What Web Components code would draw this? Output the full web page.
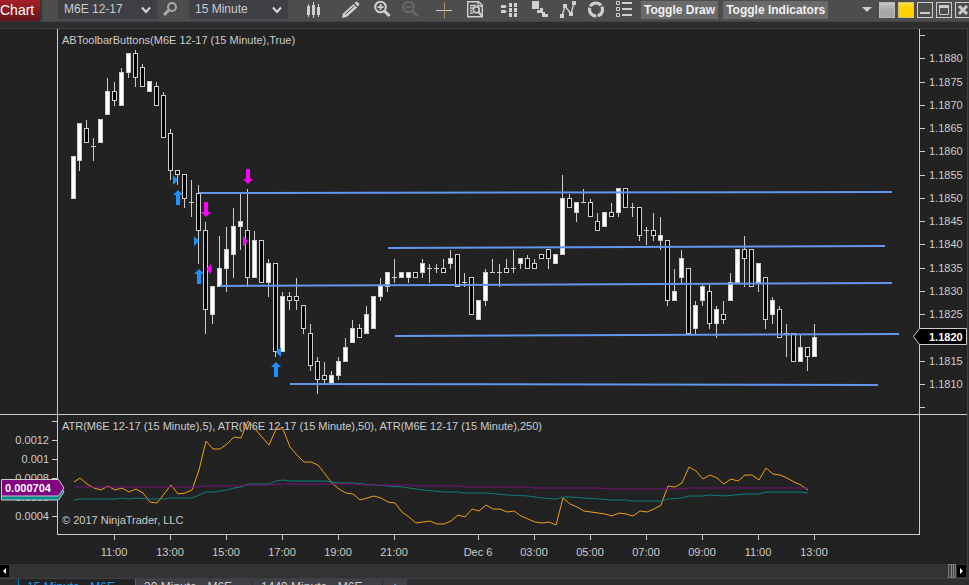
<!DOCTYPE html>
<html lang="en">
<head>
<meta charset="utf-8">
<title>Chart</title>
<style>
  html, body { margin: 0; height: 100%; }
  body {
    --line: #cccccc;
    --chrome: #2d2d30;
    --edge: #3f3f46;
    --canvas: #222222;
    background: var(--chrome);
    color: #cccccc;
    font: 11px/13px "Liberation Sans", Arial, sans-serif;
    overflow: hidden;
  }
</style>
</head>
<body>
<chart-window></chart-window>

<script>
// each candle: x, high, body top, body bottom, low, kind (u = up, d = down, n = unchanged)
const CANDLES = `
73 156 156 199 199 u|79 123 123 161 171 u|86 120 128 143 143 d|93 138 146 147 161 n|100 119 119 143 143 u
107 78 91 115 115 u|114 82 91 101 106 d|121 68 72 106 106 u|128 53 53 73 78 u|135 50 53 78 87 d
142 64 67 87 87 d|149 81 81 92 92 u|156 82 86 106 106 d|163 92 95 138 138 d|170 129 133 171 180 d
177 170 170 175 185 d|184 174 174 199 208 d|191 180 202 203 217 n|198 185 193 231 264 d|205 222 230 310 334 d
212 286 286 315 324 u|219 236 268 287 287 u|226 227 249 269 292 u|233 208 226 255 278 u|240 194 221 227 250 u
247 189 230 278 287 d|254 231 240 278 278 u|261 240 240 283 283 d|268 259 263 283 297 u|275 263 263 352 357 d
282 292 296 352 352 u|289 292 296 301 310 d|296 278 296 301 310 d|303 305 305 329 334 d|310 324 333 366 371 d
317 357 361 380 394 d|324 362 375 380 383 d|331 371 375 384 384 u|338 357 361 376 380 u|345 338 347 362 362 u
352 320 328 343 343 u|359 324 328 338 338 d|366 306 314 334 334 u|373 296 296 329 329 u|380 278 285 297 301 u
387 272 272 287 292 u|394 259 277 278 283 n|401 272 272 278 278 u|408 272 272 278 283 u|415 272 272 278 278 d
422 259 263 273 278 u|429 264 268 269 283 n|436 264 268 269 273 n|443 259 268 273 273 d|450 250 258 264 269 u
457 254 254 287 287 d|464 273 282 283 287 n|471 277 277 315 315 d|478 300 300 320 320 u|485 269 272 301 306 u
492 259 272 273 273 n|499 264 272 273 287 n|506 259 268 273 273 d|513 250 268 269 273 n|520 258 258 264 269 u
527 255 258 269 269 d|534 259 263 269 269 d|541 254 254 259 259 d|548 249 249 259 269 d|555 254 254 264 264 u
562 175 198 255 255 u|569 194 198 208 208 d|576 202 202 213 222 u|583 189 202 203 203 n|590 199 202 217 217 d
597 213 221 231 231 d|604 212 212 227 227 u|611 203 212 217 217 d|618 188 188 213 217 u|625 188 188 208 208 d
632 203 207 208 217 n|639 207 207 236 241 d|646 227 230 231 245 n|653 213 230 236 241 d|660 217 235 241 250 u
667 240 240 301 306 d|674 269 291 301 301 u|681 250 258 278 283 u|688 268 268 334 334 d|695 301 305 329 334 u
702 284 286 301 306 u|709 284 291 324 329 d|716 306 309 324 338 u|723 301 314 320 324 d|730 273 282 301 301 u
737 249 249 283 283 u|744 236 249 259 287 d|751 249 249 287 287 d|758 263 263 283 292 u|765 277 277 320 329 d
772 297 300 315 324 u|779 306 309 338 338 d|786 324 333 334 357 n|793 333 333 362 362 d|800 335 347 362 362 u
807 347 347 357 371 d|814 324 337 357 357 u`.trim().split(/[|\n]/).map(row => row.split(' '));

// ATR(5) has one value per bar, bars are 7 units apart
const ATR_FAST = [478,484,488,490,486,490,488,492,489,493,502,503,494,485,494,493,490,470,441,449,449,444,437,438,
  421,429,437,445,429,429,447,455,462,462,465,474,483,489,493,494,500,498,496,498,502,503,512,517,523,522,521,524,
  524,521,515,517,509,511,505,509,509,512,511,516,519,522,523,522,525,498,504,507,511,512,513,514,516,513,514,516,
  511,512,509,505,486,487,483,467,471,479,475,478,484,479,481,475,475,480,468,474,475,478,482,485,490];

const ATR_MID = '74,500 80,499 115,499 122,498 129,499 136,498 150,499 165,499 171,498 192,498 199,495 206,492 213,492 227,490 234,488 241,487 248,484 269,484 276,481 283,480 290,481 325,481 339,483 353,483 374,485 402,487 423,490 444,492 458,492 465,493 486,493 507,495 528,496 542,498 556,499 563,497 570,497 584,498 600,499 612,500 626,500 633,501 661,501 668,499 682,498 689,496 703,496 710,495 724,496 745,494 759,494 766,492 801,492 808,493';
const ATR_SLOW = '74,487 199,487 206,486 234,486 248,485 269,485 283,484 353,484 367,485 409,485 416,486 458,486 465,487 528,487 535,488 598,488 612,489 682,489 689,488 808,488';

const ICONS = {
  bars: `<path d="M6 4h1v13h-1zM11 2h1v16h-1zM16 4h1v13h-1zM5 6h3v9h-3zM10 5h3v10h-3zM15 7h3v8h-3z"/>`,
  pencil: `<path d="M3 18l1-4.600L14.500 3.900l3.700 3.600L7.600 17z"/><path d="M15.500 3l1.200-1.100q.9-.6 1.700 0l1.500 1.500q.9.900.1 1.800L18.900 6.500z"/><path d="M6 14.500L15.500 6" stroke="#4d4d4d" fill="none"/>`,
  zoomIn: `<circle cx="10.500" cy="7" r="5.300" fill="none" stroke="currentColor" stroke-width="2"/><path d="M7.500 6.200h2.200V4h1.700v2.200h2.200v1.700h-2.200v2.200H9.700V7.900H7.500z"/><path d="M14.500 11l5 5" stroke="currentColor" stroke-width="3"/>`,
  zoomOut: `<circle cx="10.500" cy="7" r="5.300" fill="none" stroke="currentColor" stroke-width="2"/><path d="M7.500 6.200h6v1.700h-6z"/><path d="M14.500 11l5 5" stroke="currentColor" stroke-width="3"/>`,
  cross: `<path d="M4 10h16v1H4z"/><path d="M12 2h1v16h-1z" fill="#b09468"/>`,
  data: `<path d="M4.700 1.700h11l3.600 3.600v11.400H4.700z" fill="none" stroke="currentColor" stroke-width="1.400"/><path d="M15 1v5h5M7 5.500h6M7 8h3M7 10.500h2M7 13h3" fill="none" stroke="currentColor" stroke-width="1.300"/><circle cx="13.300" cy="9.800" r="3" fill="none" stroke="currentColor" stroke-width="1.600"/><path d="M15.300 12l4 4.300" stroke="currentColor" stroke-width="2"/>`,
  align: `<path d="M4 5h4l2 1.500L8 8H4zM4 10h4l2 1.500L8 13H4zM12 3h3v4h-3zM12 8h3v4h-3zM12 13h3v4h-3zM17 3h3v4h-3zM17 8h3v4h-3zM17 13h3v4h-3z"/>`,
  steps: `<path d="M4 1h7v8H4zM9 10h3V8h3v4h2v2h3v3h-6v-4h-5z"/>`,
  zigzag: `<path d="M6 16L9 6l6 8 3-11" fill="none" stroke="currentColor" stroke-width="1.400"/><path d="M4 14h4v4H4zM7 4h4v4H7zM13 12h4v4h-4zM16 1h4v4h-4z"/>`,
  ring: `<circle cx="12" cy="9.500" r="6.500" fill="none" stroke="currentColor" stroke-width="3.200" stroke-dasharray="12.200 1.400" stroke-dashoffset="4"/>`,
  list: `<path d="M4.500 1.500h3v3h-3zM4.500 7.500h3v3h-3zM4.500 13.500h3v3h-3z" fill="none" stroke="currentColor"/><path d="M10 2h10v2H10zM10 8h10v2H10zM10 14h10v2H10z"/>`
};

class ToolIcon extends HTMLElement {
  constructor() {
    super();
    this.attachShadow({ mode: 'open' });
    this.shadowRoot.innerHTML = `
      <style>
        :host { display: block; width: 24px; height: 20px; }
        button {
          display: block;
          padding: 0;
          border: 0;
          background: none;
          color: #d0d0d0;
        }
        button:disabled { color: #686868; }
        svg { display: block; fill: currentColor; }
      </style>
      <button type="button"><svg width="24" height="20" viewBox="0 0 24 20"></svg></button>`;
  }

  connectedCallback() {
    const button = this.shadowRoot.querySelector('button');
    button.setAttribute('aria-label', this.getAttribute('label'));
    button.disabled = this.hasAttribute('disabled');
    button.firstElementChild.innerHTML = ICONS[this.getAttribute('name')];
  }
}

class ToolSelect extends HTMLElement {
  constructor() {
    super();
    this.attachShadow({ mode: 'open' });
    this.shadowRoot.innerHTML = `
      <style>
        :host { display: grid; width: 99px; height: 19px; }
        select {
          grid-area: 1 / 1;
          appearance: none;
          box-sizing: border-box;
          width: 100%;
          height: 100%;
          margin: 0;
          padding: 0 20px 0 6px;
          border: 0;
          border-radius: 0;
          background: var(--edge);
          color: #cccccc;
          font: 12px/19px "Liberation Sans", Arial, sans-serif;
        }
        svg {
          grid-area: 1 / 1;
          place-self: center end;
          margin-right: 6px;
          pointer-events: none;
        }
      </style>
      <select></select>
      <svg width="10" height="8" viewBox="0 0 10 8"><path d="M1 1.500l4 4.500 4-4.500" fill="none" stroke="#d8d8d8" stroke-width="2"/></svg>`;
  }

  connectedCallback() {
    const select = this.shadowRoot.querySelector('select');
    select.setAttribute('aria-label', this.getAttribute('label'));
    select.add(new Option(this.getAttribute('value')));
  }
}

class ChartToolbar extends HTMLElement {
  constructor() {
    super();
    this.attachShadow({ mode: 'open' });
    this.shadowRoot.innerHTML = `
      <style>
        :host {
          display: flex;
          height: 21px;
          background: #4d4d4d;
          border-bottom: 1px solid #444446;
        }
        .title {
          width: 40px;
          margin-right: 18px;
          background: linear-gradient(#a32126, #66141a);
          color: #ffffff;
          font-size: 14px;
          line-height: 20px;
          box-shadow: 1px 0 3px #222222;
        }
        .search {
          width: 32px;
          height: 20px;
          padding: 0;
          border: 0;
          background: none;
        }
        .search svg { display: block; }
        .tools {
          display: grid;
          grid-template-columns: 37px 31px 28px 34px 31px 34px 31px 28px 28px 28px 24px;
          margin: 0 5px 0 14px;
        }
        .toggle {
          height: 18px;
          margin: 1px 5px 0 0;
          padding: 0 3px;
          border: 0;
          background: #6a6a6a;
          color: #f0f0f0;
          font: bold 12px/18px "Liberation Sans", Arial, sans-serif;
          white-space: nowrap;
        }
        .caption {
          display: flex;
          gap: 3px;
          margin: 0 -2px 0 auto;
          padding-top: 2px;
        }
        .caption button {
          box-sizing: border-box;
          width: 16px;
          height: 16px;
          padding: 0;
          border: 1px solid #cccccc;
          background: none;
        }
        .caption svg { display: block; }
        .caption .drop { border: 0; width: 12px; margin-right: 3px; }
        .caption .grey { background: linear-gradient(#c9c6c6, #a9a6a6 50%); border-color: #b9b6b6; }
        .caption .gold { background: linear-gradient(#ffdf40, #ffd200 40%); border-color: #d6c070; }
      </style>
      <div class="title">Chart</div>
      <tool-select label="Instrument" value="M6E 12-17"></tool-select>
      <button class="search" type="button" aria-label="Find instrument">
        <svg width="32" height="20" viewBox="0 0 32 20" fill="none" stroke="#a8a8a8"><circle cx="15" cy="7" r="4" stroke-width="2"/><path d="M12 10l-5 5" stroke-width="3"/></svg>
      </button>
      <tool-select label="Interval" value="15 Minute"></tool-select>
      <div class="tools">
        <tool-icon name="bars" label="Chart style"></tool-icon>
        <tool-icon name="pencil" label="Drawing tools"></tool-icon>
        <tool-icon name="zoomIn" label="Zoom in"></tool-icon>
        <tool-icon name="zoomOut" label="Zoom out" disabled></tool-icon>
        <tool-icon name="cross" label="Crosshair"></tool-icon>
        <tool-icon name="data" label="Data box"></tool-icon>
        <tool-icon name="align" label="Chart trader"></tool-icon>
        <tool-icon name="steps" label="Data series"></tool-icon>
        <tool-icon name="zigzag" label="Indicators"></tool-icon>
        <tool-icon name="ring" label="Strategies"></tool-icon>
        <tool-icon name="list" label="Properties"></tool-icon>
      </div>
      <button class="toggle" type="button">Toggle Draw</button>
      <button class="toggle" type="button">Toggle Indicators</button>
      <div class="caption">
        <button class="drop" type="button" aria-label="More"><svg width="12" height="16" viewBox="0 0 12 16"><path d="M1 5h10L6 10z" fill="#cccccc"/></svg></button>
        <button class="grey" type="button" aria-label="Instrument link"></button>
        <button class="gold" type="button" aria-label="Interval link"></button>
        <button type="button" aria-label="Minimize"><svg width="14" height="14" viewBox="0 0 14 14"><path d="M2 9h10v2H2z" fill="#cccccc"/></svg></button>
        <button type="button" aria-label="Maximize"><svg width="14" height="14" viewBox="0 0 14 14"><path d="M2.500 3.500h9v8h-9z" fill="none" stroke="#cccccc"/><path d="M2 2h10v3H2z" fill="#cccccc"/></svg></button>
        <button type="button" aria-label="Close"><svg width="14" height="14" viewBox="0 0 14 14"><path d="M3 3l8 8M11 3l-8 8" stroke="#cccccc" stroke-width="3"/></svg></button>
      </div>`;
  }
}

// column of labels with tick marks; an empty entry is a bare tick
class ValueAxis extends HTMLElement {
  constructor() {
    super();
    this.attachShadow({ mode: 'open' });
    this.shadowRoot.innerHTML = `
      <style>
        :host { display: flex; flex-direction: column; justify-content: space-between; }
        div { display: flex; align-items: center; gap: 4px; height: 13px; }
        div::before { content: ""; width: 5px; height: 1px; background: var(--line); }
        :host([side="left"]) div { flex-direction: row-reverse; gap: 3px; }
      </style>`;
  }

  connectedCallback() {
    for (const label of this.getAttribute('labels').split(',')) {
      const row = document.createElement('div');
      row.textContent = label;
      this.shadowRoot.append(row);
    }
  }
}

class PriceTag extends HTMLElement {
  constructor() {
    super();
    this.attachShadow({ mode: 'open' });
    this.shadowRoot.innerHTML = `
      <style>
        :host { display: grid; color: #ffffff; font-weight: bold; }
        svg, span { grid-area: 1 / 1; }
        svg { display: block; }
        span { align-self: center; padding-left: var(--tag-indent, 4px); }
        path { fill: var(--tag-fill, #000000); stroke: var(--line); }
      </style>
      <svg></svg><span><slot></slot></span>`;
  }

  connectedCallback() {
    const svg = this.shadowRoot.querySelector('svg');
    const left = this.getAttribute('point') === 'left';
    svg.setAttribute('width', left ? 54 : 64);
    svg.setAttribute('height', 18);
    svg.innerHTML = left
      ? '<path d="M.5 8.500L6.500.5h47v16h-47z"/>'
      : '<path d="M.5.5h57l5.500 8.500-5.500 8h-57z"/>';
  }
}

class PricePanel extends HTMLElement {
  constructor() {
    super();
    this.attachShadow({ mode: 'open' });
    const bars = CANDLES.map(([x, high, top, bottom, low, kind]) => {
      const wick = `<path d="M${x} ${high}h1V${low}h-1z"/>`;
      const body = `<path d="M${x - 2} ${top}h5V${bottom}h-5z"/>`;
      if (kind === 'n') return wick + body;
      return wick + body + `<path class="${kind}" d="M${x - 1} ${+top + 1}h3V${bottom - 1}h-3z"/>`;
    }).join('');
    const up = (x, y) => `<path class="buy" d="M${x} ${y}l5 5h-3v10h-4v-10h-3z"/>`;
    const down = (x, y) => `<path class="sell" d="M${x} ${y}l5-5h-3v-10h-4v10h-3z"/>`;
    this.shadowRoot.innerHTML = `
      <style>
        :host {
          display: grid;
          grid-template-columns: 57px minmax(0, 1fr) 47px;
          grid-template-rows: minmax(0, 1fr);
          border-bottom: 1px solid var(--line);
        }
        .plot {
          grid-column: 2;
          display: grid;
          grid-template-rows: minmax(0, 1fr);
          border: solid var(--line);
          border-width: 0 1px;
        }
        .plot > * { grid-area: 1 / 1; }
        .name { padding: 5px 4px; }
        svg { display: block; width: 100%; height: 100%; fill: var(--line); }
        .u { fill: #ffffff; }
        .d { fill: #000000; }
        .trend { stroke: #6495ed; stroke-width: 2; }
        .buy { fill: #1e90ff; }
        .sell { fill: #ff00ff; }
        .scale { position: relative; display: grid; }
        price-tag { position: absolute; left: -7px; top: 80%; transform: translateY(-50%); --tag-indent: 16px; }
      </style>
      <div class="plot">
        <svg viewBox="58 29 861 385" preserveAspectRatio="none">
          <g shape-rendering="crispEdges">${bars}</g>
          <g class="trend">
            <path d="M199 193L892 192"/>
            <path d="M388 248L885 246"/>
            <path d="M220 286L892 283"/>
            <path d="M395 336L899 334"/>
            <path d="M290 384L878 385"/>
          </g>
          ${up(178, 190)}${up(199, 269)}${up(276, 362)}
          ${down(206, 217)}${down(248, 184)}
          <path class="buy" d="M173 175v10l5-5zM194 236v10l5-5zM281 347v10l-5-5z"/>
          <path class="sell" d="M243 236v10l5-5zM211 264v10l-5-5z"/>
        </svg>
        <div class="name">ABToolbarButtons(M6E 12-17 (15 Minute),True)</div>
      </div>
      <div class="scale">
        <value-axis labels=",1.1880,1.1875,1.1870,1.1865,1.1860,1.1855,1.1850,1.1845,1.1840,1.1835,1.1830,1.1825,,1.1815,1.1810,"></value-axis>
        <price-tag point="left">1.1820</price-tag>
      </div>`;
  }
}

class AtrPanel extends HTMLElement {
  constructor() {
    super();
    this.attachShadow({ mode: 'open' });
    const fast = '74,482 ' + ATR_FAST.map((y, i) => `${80 + i * 7},${y}`).join(' ');
    this.shadowRoot.innerHTML = `
      <style>
        :host {
          display: grid;
          grid-template-columns: 57px minmax(0, 1fr) 47px;
          grid-template-rows: minmax(0, 1fr);
        }
        .scale { position: relative; z-index: 1; display: grid; padding-bottom: 12px; }
        .plot {
          display: grid;
          grid-template-rows: minmax(0, 1fr);
          border: solid var(--line);
          border-width: 0 1px 1px;
        }
        .plot > * { grid-area: 1 / 1; }
        .name, .owner { padding: 5px 4px; }
        .owner { align-self: end; padding-bottom: 7px; }
        svg { display: block; width: 100%; height: 100%; fill: none; z-index: 1; }
        price-tag { position: absolute; left: 1px; top: 61%; transform: translateY(-50%); --tag-fill: #800080; }
        price-tag.back { --tag-fill: #008b8b; margin-top: 4px; }
      </style>
      <div class="scale">
        <value-axis side="left" labels=",0.0012,0.001,0.0008,0.0006,0.0004"></value-axis>
        <price-tag class="back">0.000665</price-tag>
        <price-tag>0.000704</price-tag>
      </div>
      <div class="plot">
        <div class="name">ATR(M6E 12-17 (15 Minute),5), ATR(M6E 12-17 (15 Minute),50), ATR(M6E 12-17 (15 Minute),250)</div>
        <div class="owner">© 2017 NinjaTrader, LLC</div>
        <svg viewBox="58 415 861 119" preserveAspectRatio="none">
          <polyline points="${fast}" stroke="#f0a010"/>
          <polyline points="${ATR_MID}" stroke="#0b7f7c"/>
          <polyline points="${ATR_SLOW}" stroke="#780f78"/>
        </svg>
      </div>`;
  }
}

class TimeAxis extends HTMLElement {
  constructor() {
    super();
    this.attachShadow({ mode: 'open' });
    const labels = ['11:00', '13:00', '15:00', '17:00', '19:00', '21:00', '', 'Dec 6', '03:00', '05:00', '07:00', '09:00', '11:00', '13:00'];
    this.shadowRoot.innerHTML = `
      <style>
        :host {
          display: grid;
          grid-template-columns: 29fr repeat(6, 56fr) 28fr repeat(7, 56fr) 78fr;
          height: 29px;
          margin: 0 47px 0 57px;
        }
        span { display: grid; justify-items: center; align-content: start; gap: 6px; white-space: nowrap; }
        span:first-of-type { grid-column: 2; }
        span:not(:empty)::before { content: ""; width: 1px; height: 5px; background: var(--line); }
      </style>
      ${labels.map(label => `<span>${label}</span>`).join('')}`;
  }
}

class ScrollStrip extends HTMLElement {
  constructor() {
    super();
    this.attachShadow({ mode: 'open' });
    this.shadowRoot.innerHTML = `
      <style>
        :host {
          display: flex;
          height: 14px;
          padding-right: 3px;
          background: #333333;
          border-bottom: 1px solid var(--edge);
        }
        button { width: 9px; height: 12px; margin-top: 1px; padding: 0; border: 0; background: #000000; }
        button svg { display: block; }
        .thumb {
          box-sizing: border-box;
          width: 8px;
          margin: 0 1px 0 auto;
          border: 1px solid #777777;
          background: linear-gradient(90deg, #444444 2px, #888888 2px 3px, #444444 3px 4px, #888888 4px 5px, #444444 5px);
        }
      </style>
      <button type="button" aria-label="Scroll left"><svg width="9" height="12" viewBox="0 0 9 12"><path d="M6 3v6L3 6z" fill="#ffffff"/></svg></button>
      <div class="thumb"></div>
      <button type="button" aria-label="Scroll right"><svg width="9" height="12" viewBox="0 0 9 12"><path d="M3 3v6l3-3z" fill="#ffffff"/></svg></button>`;
  }
}

class ChartTabs extends HTMLElement {
  constructor() {
    super();
    this.attachShadow({ mode: 'open' });
    this.shadowRoot.innerHTML = `
      <style>
        :host { display: flex; height: 6px; padding-left: 18px; overflow: hidden; }
        button {
          height: 17px;
          padding: 0 20px 0 8px;
          border: 0;
          border-right: 1px solid var(--chrome);
          background: var(--edge);
          color: #cccccc;
          font: 12px/17px "Liberation Sans", Arial, sans-serif;
          white-space: nowrap;
        }
        button.active {
          border: solid #007acc;
          border-width: 0 1px;
          background: var(--canvas);
          color: #1c97ea;
        }
        .add { padding: 0 8px; }
      </style>
      <button class="active" type="button">15 Minute - M6E</button>
      <button type="button">30 Minute - M6E</button>
      <button type="button">1440 Minute - M6E</button>
      <button class="add" type="button">+</button>`;
  }
}

class ChartWindow extends HTMLElement {
  constructor() {
    super();
    this.attachShadow({ mode: 'open' });
    this.shadowRoot.innerHTML = `
      <style>
        :host { display: flex; flex-direction: column; height: 100vh; overflow: hidden; }
        .canvas {
          flex: 1;
          display: grid;
          grid-template-rows: 386fr 120fr 29px;
          margin: 6px 1px 0 0;
          border: solid var(--edge);
          border-width: 1px 1px 0 0;
          background: var(--canvas);
        }
      </style>
      <chart-toolbar></chart-toolbar>
      <div class="canvas">
        <price-panel></price-panel>
        <atr-panel></atr-panel>
        <time-axis></time-axis>
      </div>
      <scroll-strip></scroll-strip>
      <chart-tabs></chart-tabs>`;
  }
}

customElements.define('tool-icon', ToolIcon);
customElements.define('tool-select', ToolSelect);
customElements.define('chart-toolbar', ChartToolbar);
customElements.define('value-axis', ValueAxis);
customElements.define('price-tag', PriceTag);
customElements.define('price-panel', PricePanel);
customElements.define('atr-panel', AtrPanel);
customElements.define('time-axis', TimeAxis);
customElements.define('scroll-strip', ScrollStrip);
customElements.define('chart-tabs', ChartTabs);
customElements.define('chart-window', ChartWindow);
</script>
</body>
</html>
